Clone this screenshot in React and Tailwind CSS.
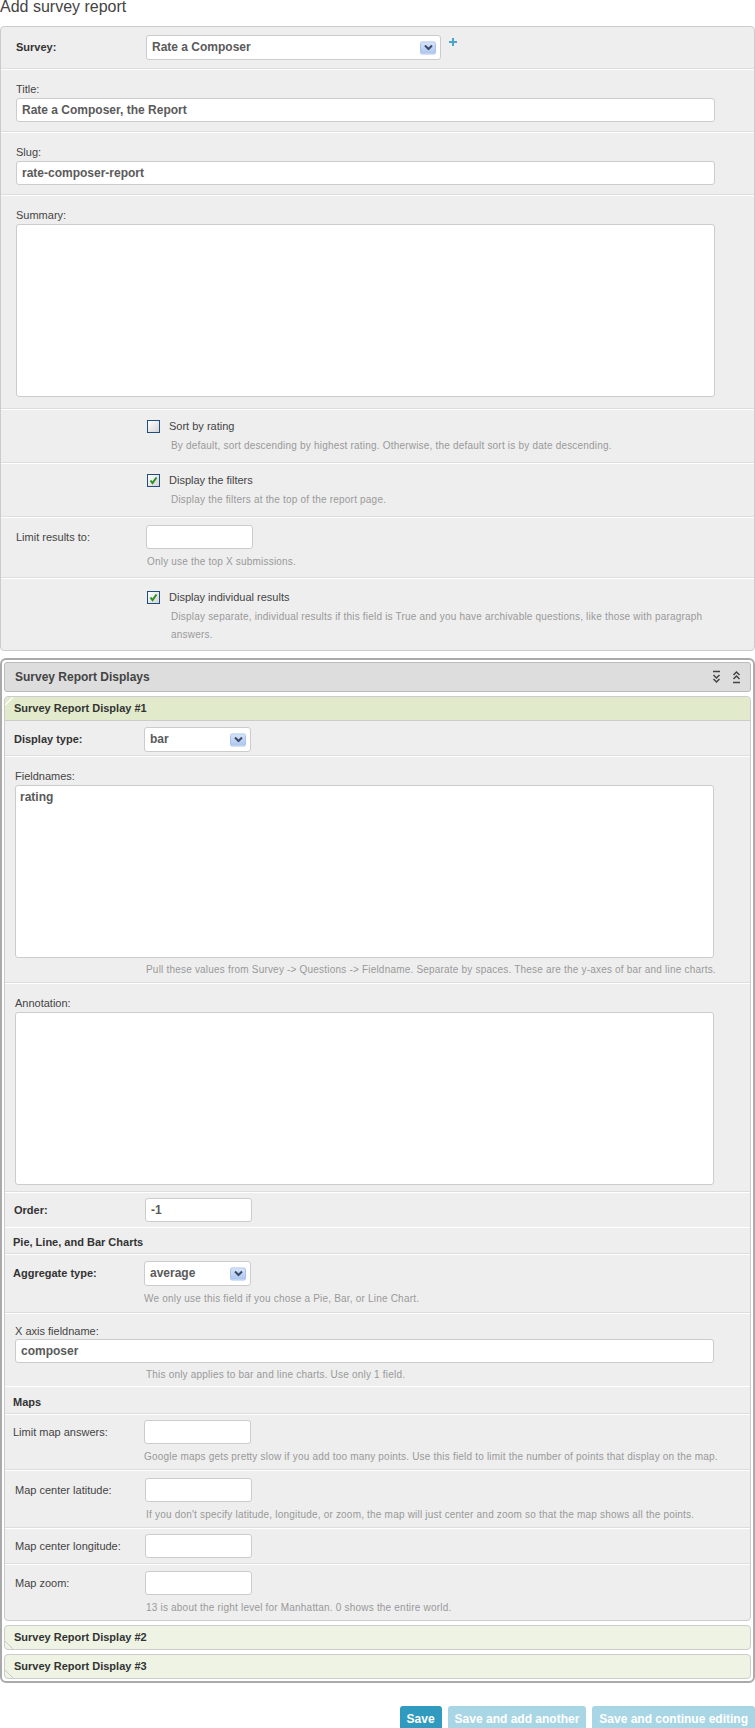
import React from "react";

const Arrow = () => (
    <span className="absolute right-[4px] top-1/2 -translate-y-1/2 flex h-[13px] w-[16px] items-center justify-center rounded-[2px] border border-[#a9c2ea] bg-gradient-to-b from-[#d6e3f8] to-[#adc6ef]">
        <svg width="9" height="6" viewBox="0 0 9 6">
            <polyline points="1,1 4.5,4.5 8,1" fill="none" stroke="#3b4a68" strokeWidth="2" />
        </svg>
    </span>
);

const Select = ({ value, w }) => (
    <div className={`relative h-[25px] ${w} rounded-[3px] border border-[#ccc] bg-white pl-[5px] text-[12px] font-bold leading-[23px] text-[#5a5a5a]`}>
        {value}
        <Arrow />
    </div>
);

const Input = ({ value = "", w = "w-[107px]" }) => (
    <div className={`h-[24px] ${w} rounded-[3px] border border-[#ccc] bg-white pl-[5px] text-[12px] font-bold leading-[22px] text-[#5a5a5a]`}>
        {value}
    </div>
);

const Textarea = ({ value = "" }) => (
    <div className="h-[173px] w-[699px] rounded-[3px] border border-[#ccc] bg-white px-[4px] pt-[3px] text-[12px] font-bold leading-[16px] text-[#5a5a5a]">
        {value}
    </div>
);

const Checkbox = ({ checked }) => (
    <span className="flex h-[13px] w-[13px] shrink-0 items-center justify-center border-[1.5px] border-[#204d7e] bg-gradient-to-br from-white to-[#d4d4d4]">
        {checked && (
            <svg width="9" height="9" viewBox="0 0 9 9">
                <polyline points="1.5,4.5 3.5,7 7.5,1.5" fill="none" stroke="#2b9120" strokeWidth="2" />
            </svg>
        )}
    </span>
);

const Help = ({ children, className = "" }) => (
    <p className={`text-[10px] leading-[18px] tracking-[0.2px] text-[#999] ${className}`}>{children}</p>
);

const row = "border-t border-t-white border-b border-b-[#ddd]";

const InlineRow = ({ label, bold, children, help, className = "" }) => (
    <div className={`${row} ${className}`}>
        <div className="flex items-center">
            <span className={`w-[130px] text-[11px] ${bold ? "font-bold text-[#333]" : "text-[#444]"}`}>{label}</span>
            {children}
        </div>
        {help && <Help className="mt-[4px] pl-[131px]">{help}</Help>}
    </div>
);

const CheckRow = ({ label, checked, help, className = "" }) => (
    <div className={`${row} pl-[146px] ${className}`}>
        <div className="flex h-[13px] items-center gap-[9px]">
            <Checkbox checked={checked} />
            <span className="text-[11px] text-[#444]">{label}</span>
        </div>
        <Help className="mt-[4px] pl-[24px] pr-[20px]">{help}</Help>
    </div>
);

const StackRow = ({ label, children, className = "" }) => (
    <div className={`${row} ${className}`}>
        <div className="mb-[2px] h-[14px] text-[11px] leading-[14px] text-[#444]">{label}</div>
        {children}
    </div>
);

const CollapseAll = () => (
    <svg width="9" height="14" viewBox="0 0 9 14">
        <line x1="1" y1="1.5" x2="8" y2="1.5" stroke="#444" strokeWidth="1.5" />
        <polyline points="1.5,5 4.5,8 7.5,5" fill="none" stroke="#444" strokeWidth="1.5" />
        <polyline points="1.5,9 4.5,12 7.5,9" fill="none" stroke="#444" strokeWidth="1.5" />
    </svg>
);

const ExpandAll = () => (
    <svg width="9" height="14" viewBox="0 0 9 14">
        <polyline points="1.5,5 4.5,2 7.5,5" fill="none" stroke="#444" strokeWidth="1.5" />
        <polyline points="1.5,9 4.5,6 7.5,9" fill="none" stroke="#444" strokeWidth="1.5" />
        <line x1="1" y1="12.5" x2="8" y2="12.5" stroke="#444" strokeWidth="1.5" />
    </svg>
);

// little folded-corner mark on the inline headers
const Corner = ({ bottom }) => (
    <svg className={`absolute left-0 ${bottom ? "bottom-0" : "top-0"}`} width="9" height="9" viewBox="0 0 9 9">
        {bottom ? (
            <line x1="0" y1="1" x2="8" y2="9" stroke="#c8c8c8" strokeWidth="1" />
        ) : (
            <line x1="0" y1="8" x2="8" y2="0" stroke="#fff" strokeWidth="1.2" />
        )}
    </svg>
);

export default function App() {
    return (
        <div className="min-h-screen bg-white font-['Liberation_Sans',Arial,sans-serif] text-[#444]">
            <h1 className="mt-[-1px] mb-[11px] text-[16px] font-normal leading-[16px] text-[#444]">Add survey report</h1>

            {/* main fieldset */}
            <div className="rounded-[4px] border border-[#ccc] bg-[#eee]">
                <div className="flex items-center border-b border-b-[#ddd] pt-[8px] pb-[8px] pl-[15px]">
                    <span className="w-[130px] text-[11px] font-bold text-[#333]">Survey:</span>
                    <Select value="Rate a Composer" w="w-[295px]" />
                    <svg className="ml-[8px] self-start mt-[3px]" width="8" height="8" viewBox="0 0 8 8">
                        <line x1="4" y1="0" x2="4" y2="8" stroke="#4aa5cc" strokeWidth="2" />
                        <line x1="0" y1="4" x2="8" y2="4" stroke="#4aa5cc" strokeWidth="2" />
                    </svg>
                </div>
                <StackRow label="Title:" className="pt-[12px] pb-[9px] pl-[15px]">
                    <Input value="Rate a Composer, the Report" w="w-[699px]" />
                </StackRow>
                <StackRow label="Slug:" className="pt-[12px] pb-[9px] pl-[15px]">
                    <Input value="rate-composer-report" w="w-[699px]" />
                </StackRow>
                <StackRow label="Summary:" className="pt-[12px] pb-[11px] pl-[15px]">
                    <Textarea />
                </StackRow>
                <CheckRow
                    label="Sort by rating"
                    help="By default, sort descending by highest rating. Otherwise, the default sort is by date descending."
                    className="pt-[10px] pb-[7px]"
                />
                <CheckRow
                    label="Display the filters"
                    checked
                    help="Display the filters at the top of the report page."
                    className="pt-[10px] pb-[7px]"
                />
                <InlineRow label="Limit results to:" help="Only use the top X submissions." className="pt-[7px] pb-[6px] pl-[15px]">
                    <Input />
                </InlineRow>
                <CheckRow
                    label="Display individual results"
                    checked
                    help="Display separate, individual results if this field is True and you have archivable questions, like those with paragraph answers."
                    className="border-b-0 pt-[12px] pb-[6px]"
                />
            </div>

            {/* inline group */}
            <div className="mt-[7px] flex flex-col gap-[4px] rounded-[6px] border-2 border-[#aaa] p-[2px]">
                <div className="flex h-[30px] items-center justify-between rounded-[3px] border border-[#bbb] bg-[#ddd] pl-[10px] pr-[9px]">
                    <span className="text-[12px] font-bold text-[#444]">Survey Report Displays</span>
                    <span className="flex items-center gap-[11px]">
                        <CollapseAll />
                        <ExpandAll />
                    </span>
                </div>

                <div className="rounded-[4px] border border-[#ccc] bg-[#eee]">
                    <div className="relative flex h-[24px] items-center rounded-t-[4px] border-b border-b-[#ccc] bg-[#e1eacb] pl-[9px] text-[11px] font-bold text-[#333]">
                        <Corner />
                        Survey Report Display #1
                    </div>
                    <InlineRow label="Display type:" bold className="pt-[6px] pb-[3px] pl-[9px] border-t-0">
                        <Select value="bar" w="w-[107px]" />
                    </InlineRow>
                    <StackRow label="Fieldnames:" className="pt-[12px] pb-[3px] pl-[10px]">
                        <Textarea value="rating" />
                        <Help className="mt-[3px] pl-[131px]">
                            Pull these values from Survey -&gt; Questions -&gt; Fieldname. Separate by spaces. These are the y-axes of bar and line charts.
                        </Help>
                    </StackRow>
                    <StackRow label="Annotation:" className="pt-[12px] pb-[6px] pl-[10px]">
                        <Textarea />
                    </StackRow>
                    <div className="flex items-center border-t border-t-white pt-[5px] pb-[5px] pl-[9px]">
                        <span className="w-[131px] text-[11px] font-bold text-[#333]">Order:</span>
                        <Input value="-1" />
                    </div>

                    <div className={`${row} pt-[7px] pb-[4px] pl-[8px] text-[11px] font-bold leading-[14px] text-[#333]`}>
                        Pie, Line, and Bar Charts
                    </div>
                    <InlineRow label="Aggregate type:" bold help="We only use this field if you chose a Pie, Bar, or Line Chart." className="pt-[6px] pb-[4px] pl-[8px]">
                        <div className="w-[1px]" />
                        <Select value="average" w="w-[107px]" />
                    </InlineRow>
                    <div className="border-t border-t-white pt-[10px] pb-[2px] pl-[10px]">
                        <div className="mb-[1px] h-[14px] text-[11px] leading-[14px] text-[#444]">X axis fieldname:</div>
                        <Input value="composer" w="w-[699px]" />
                        <Help className="mt-[3px] pl-[131px]">This only applies to bar and line charts. Use only 1 field.</Help>
                    </div>

                    <div className={`${row} pt-[8px] pb-[4px] pl-[8px] text-[11px] font-bold leading-[14px] text-[#333]`}>Maps</div>
                    <InlineRow
                        label="Limit map answers:"
                        help="Google maps gets pretty slow if you add too many points. Use this field to limit the number of points that display on the map."
                        className="pt-[5px] pb-[3px] pl-[8px]"
                    >
                        <div className="w-[1px]" />
                        <Input />
                    </InlineRow>
                    <InlineRow
                        label="Map center latitude:"
                        help="If you don't specify latitude, longitude, or zoom, the map will just center and zoom so that the map shows all the points."
                        className="pt-[7px] pb-[3px] pl-[10px]"
                    >
                        <Input />
                    </InlineRow>
                    <InlineRow label="Map center longitude:" className="pt-[5px] pb-[5px] pl-[10px]">
                        <Input />
                    </InlineRow>
                    <InlineRow
                        label="Map zoom:"
                        help="13 is about the right level for Manhattan. 0 shows the entire world."
                        className="border-b-0 pt-[6px] pb-[3px] pl-[10px]"
                    >
                        <Input />
                    </InlineRow>
                </div>

                <div className="relative flex h-[25px] items-center rounded-[4px] border border-[#ccc] bg-[#eef3e4] pl-[9px] text-[11px] font-bold text-[#333]">
                    <Corner bottom />
                    Survey Report Display #2
                </div>
                <div className="relative flex h-[25px] items-center rounded-[4px] border border-[#ccc] bg-[#eef3e4] pl-[9px] text-[11px] font-bold text-[#333]">
                    <Corner bottom />
                    Survey Report Display #3
                </div>
            </div>

            <div className="mt-[23px] flex justify-end gap-[6px]">
                <button className="h-[26px] rounded-[3px] bg-[#309bbf] px-[7px] text-[12px] font-bold text-white">Save</button>
                <button className="h-[26px] rounded-[3px] bg-[#a9d6e5] px-[7px] text-[12px] font-bold text-white">Save and add another</button>
                <button className="h-[26px] rounded-[3px] bg-[#a9d6e5] px-[7px] text-[12px] font-bold text-white">Save and continue editing</button>
            </div>
        </div>
    );
}
